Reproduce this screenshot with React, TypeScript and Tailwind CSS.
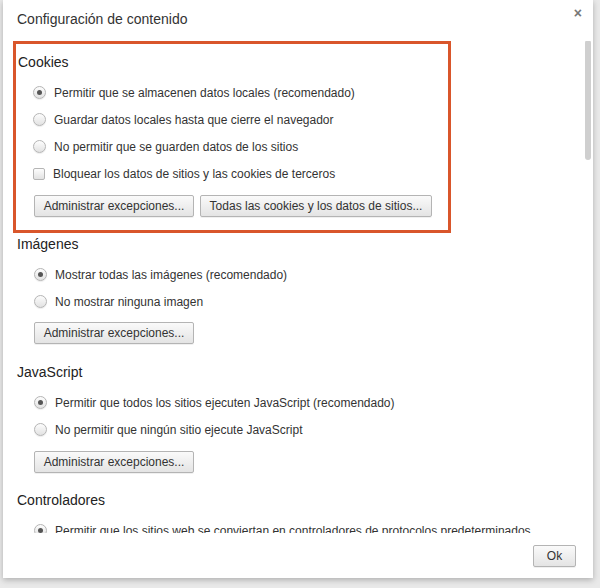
import type { ReactNode } from 'react'

const font = { fontFamily: '"Liberation Sans", Arial, sans-serif' }

function Radio({ checked }: { checked?: boolean }) {
  return (
    <span className="flex h-[13px] w-[13px] shrink-0 items-center justify-center rounded-full border border-[#b5b5b5] bg-gradient-to-b from-[#fdfdfd] to-[#e2e2e2] shadow-[0_1px_1px_rgba(0,0,0,0.08)]">
      {checked && <span className="h-[5px] w-[5px] rounded-full bg-[#555]" />}
    </span>
  )
}

function Check() {
  return (
    <span className="h-[12px] w-[12px] shrink-0 rounded-[2px] border border-[#b5b5b5] bg-gradient-to-b from-[#fdfdfd] to-[#e2e2e2]" />
  )
}

function Option({ children, checked, box }: { children: ReactNode; checked?: boolean; box?: boolean }) {
  return (
    <div className="flex h-[27px] items-center gap-[8px] pl-[20px] text-[12px] whitespace-nowrap text-[#333]">
      {box ? <Check /> : <Radio checked={checked} />}
      <span>{children}</span>
    </div>
  )
}

function Btn({ children, className = '' }: { children: ReactNode; className?: string }) {
  return (
    <button
      className={`h-[22px] whitespace-nowrap rounded-[2px] border border-[#b4b4b4] bg-gradient-to-b from-[#fafafa] to-[#e4e4e4] px-0 text-[12px] text-[#333] shadow-[0_1px_0_rgba(0,0,0,0.06)] ${className}`}
    >
      {children}
    </button>
  )
}

function Heading({ children }: { children: ReactNode }) {
  return <h2 className="text-[14px] leading-[18px] text-[#222]">{children}</h2>
}

export default function App() {
  return (
    <div className="flex h-[588px] w-[600px] bg-[#e9e9e9] pl-[3px] pr-[7px] pb-[10px]" style={font}>
      <div className="relative flex flex-1 flex-col bg-white shadow-[0_2px_6px_rgba(0,0,0,0.25)]">
        <div className="flex h-[41px] shrink-0 items-start justify-between pl-[14px] pr-[11px] pt-[10px]">
          <h1 className="text-[14px] leading-[18px] text-[#333]">Configuración de contenido</h1>
          <span className="text-[14px] leading-[6px] font-bold text-[#777]">×</span>
        </div>
        <div className="relative flex-1 overflow-hidden">
          <div className="absolute right-[2px] top-[-1px] h-[120px] w-[6px] rounded-[3px] bg-[#cfcfcf]" />
          <div className="ml-[10px] w-[438px] border-[3px] border-[#d9562b] pb-[13px] pt-[9px]">
            <div className="pl-[2px]"><Heading>Cookies</Heading></div>
            <div className="mt-[8px] -ml-[3px]">
              <Option checked>Permitir que se almacenen datos locales (recomendado)</Option>
              <Option>Guardar datos locales hasta que cierre el navegador</Option>
              <Option>No permitir que se guarden datos de los sitios</Option>
              <Option box>Bloquear los datos de sitios y las cookies de terceros</Option>
              <div className="mt-[8px] flex gap-[6px] pl-[21px]">
                <Btn className="w-[160px]">Administrar excepciones...</Btn>
                <Btn className="w-[232px]">Todas las cookies y los datos de sitios...</Btn>
              </div>
            </div>
          </div>
          <div className="pl-[14px] pt-[2px]">
            <Heading>Imágenes</Heading>
            <div className="mt-[8px] -ml-[3px]">
              <Option checked>Mostrar todas las imágenes (recomendado)</Option>
              <Option>No mostrar ninguna imagen</Option>
              <div className="mt-[5px] pl-[20px]">
                <Btn className="w-[160px]">Administrar excepciones...</Btn>
              </div>
            </div>
          </div>
          <div className="pl-[14px] pt-[19px]">
            <Heading>JavaScript</Heading>
            <div className="mt-[8px] -ml-[3px]">
              <Option checked>Permitir que todos los sitios ejecuten JavaScript (recomendado)</Option>
              <Option>No permitir que ningún sitio ejecute JavaScript</Option>
              <div className="mt-[6px] pl-[20px]">
                <Btn className="w-[160px]">Administrar excepciones...</Btn>
              </div>
            </div>
          </div>
          <div className="pl-[14px] pt-[18px]">
            <Heading>Controladores</Heading>
            <div className="mt-[8px] -ml-[3px]">
              <Option checked>Permitir que los sitios web se conviertan en controladores de protocolos predeterminados</Option>
            </div>
          </div>
        </div>
        <div className="flex h-[45px] shrink-0 items-start justify-end pr-[17px] pt-[12px]">
          <Btn className="w-[43px]">Ok</Btn>
        </div>
      </div>
    </div>
  )
}
